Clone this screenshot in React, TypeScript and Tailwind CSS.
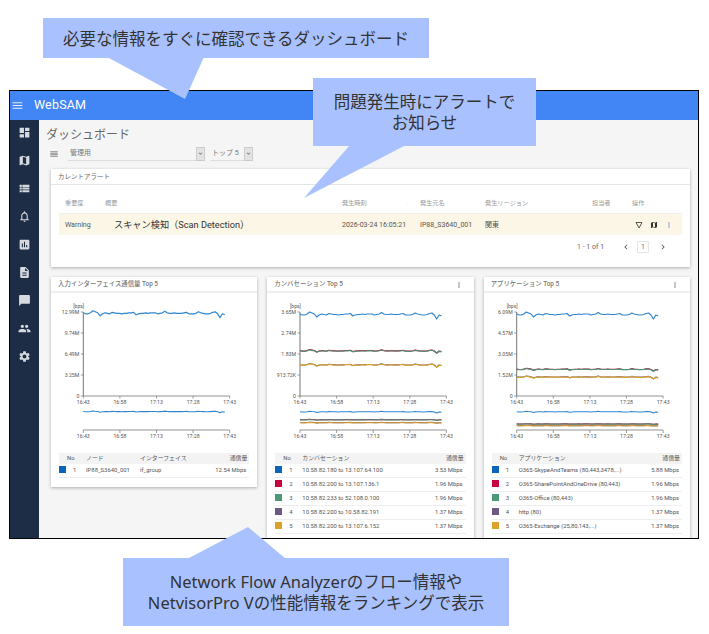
import {
  MdAssessment,
  MdChatBubble,
  MdChevronLeft,
  MdChevronRight,
  MdDashboard,
  MdDescription,
  MdExpandMore,
  MdMap,
  MdMenu,
  MdMoreVert,
  MdNotificationsNone,
  MdPeople,
  MdSettings,
  MdViewList,
} from 'react-icons/md';

const BLUE = '#2f86cf';
const RED = '#c7043f';
const GREEN = '#4f8f74';
const PURPLE = '#6c5a85';
const YELLOW = '#dba32a';
const swatches = ['bg-[#0b66bb]', 'bg-[#c7043f]', 'bg-[#4b9976]', 'bg-[#6c5a85]', 'bg-[#dba32a]'];

// pixel offsets of the traffic line, positive is down
const wave = [
  0, 1, 1, 0, -2, -1, 0, 3, 1, 0, 0.5, 1, -0.5, 0, 0.5, 0.5, 1, 0.5, 0.5, 0, 0, -0.5, 2, 1, 0.5, 0.5, 0, 0.5, 0, 0,
  0, 1, 0.5, 0, -1.5, 0, 0.5, 0.5, 0, 0.5, 0.5, 0.5, 0, -0.5, 1, 1, 1, 0.5, -1, 0, 0.5, 1, 1, 0.5, -0.5, -1, 1, 5, 1, 2,
];

type Series = { color: string; y: number; brushY: number; amp: number };

type ChartProps = {
  left: number;
  yTicks: string[];
  series: Series[];
};

function points(left: number, base: number, amp: number) {
  return wave
    .map((d, i) => `${(left + (i * 141.5) / (wave.length - 1)).toFixed(1)},${(base + d * amp).toFixed(1)}`)
    .join(' ');
}

function Chart({ left, yTicks, series }: ChartProps) {
  const xLabels = ['16:43', '16:58', '17:13', '17:28', '17:43'];
  const xs = xLabels.map((_, i) => left + i * 36.6);
  return (
    <svg width="207" height="160" className="block" fontSize="5.2" fill="#555">
      <text x={left - 10} y="14.5" fontSize="5">[bps]</text>
      {yTicks.map((t, i) => {
        const y = 19 + i * 21;
        return (
          <g key={t}>
            <text x={left - 4} y={y + 2} textAnchor="end">{t}</text>
            <line x1={left - 2.5} x2={left} y1={y} y2={y} stroke="#777" strokeWidth="0.7" />
          </g>
        );
      })}
      <line x1={left} x2={left} y1="19" y2="103" stroke="#666" strokeWidth="0.9" />
      <line x1={left} x2={xs[4]} y1="103" y2="103" stroke="#777" strokeWidth="0.8" />
      {xLabels.map((t, i) => (
        <g key={t}>
          <line x1={xs[i]} x2={xs[i]} y1="103" y2="105.5" stroke="#777" strokeWidth="0.7" />
          <text x={xs[i]} y="111" textAnchor="middle">{t}</text>
          <line x1={xs[i]} x2={xs[i]} y1="137" y2="140" stroke="#777" strokeWidth="0.7" />
          <text x={xs[i]} y="145" textAnchor="middle">{t}</text>
        </g>
      ))}
      <line x1={left} x2={xs[4]} y1="137" y2="137" stroke="#777" strokeWidth="0.8" />
      {series.map((s, i) => (
        <g key={i} fill="none" stroke={s.color} strokeLinejoin="round">
          <polyline points={points(left, s.y, s.amp)} strokeWidth="1.2" />
          <polyline points={points(left, s.brushY, s.amp * 0.25)} strokeWidth="1.1" />
        </g>
      ))}
    </svg>
  );
}

type Row = { name: string; sub?: string; value: string };

type ChartCardProps = ChartProps & {
  title: string;
  menu?: boolean;
  nameHead: string;
  subHead?: string;
  rows: Row[];
};

function ChartCard({ title, menu, nameHead, subHead, rows, ...chart }: ChartCardProps) {
  return (
    <div className="bg-white shadow-[0_1px_3px_rgba(0,0,0,0.3)]">
      <div className="h-4 flex items-center justify-between pt-[2px] pl-[7px] pr-[11px] border-b-2 border-[#eeeeee]">
        <span className="text-[6.4px] font-medium text-[#777777]">{title}</span>
        {menu && <MdMoreVert className="w-2 h-2 text-[#555555]" />}
      </div>
      <Chart {...chart} />
      <div className="mx-2 pb-[9px] text-[5.9px] text-[#555555]">
        <div className="h-[10.5px] bg-[#f3f3f3] flex items-center pr-[2px]">
          <span className="w-[27px] pl-2">No</span>
          <span className={subHead ? 'w-[54px]' : 'flex-1'}>{nameHead}</span>
          {subHead && <span className="flex-1">{subHead}</span>}
          <span>通信量</span>
        </div>
        {rows.map((r, i) => (
          <div key={i} className="h-[14px] flex items-center pr-[3px] border-b border-[#eeeeee]">
            <span className="w-[27px] flex items-center">
              <span className={`w-[7px] h-[7px] ${swatches[i]}`} />
              <span className="ml-[7px]">{i + 1}</span>
            </span>
            <span className={r.sub ? 'w-[54px]' : 'flex-1'}>{r.name}</span>
            {r.sub && <span className="flex-1">{r.sub}</span>}
            <span>{r.value}</span>
          </div>
        ))}
      </div>
    </div>
  );
}

function Select({ label, className }: { label: string; className: string }) {
  return (
    <div className={`flex items-center h-[15px] ${className}`}>
      <div className="flex-1 h-[14px] flex items-center pl-[2px] text-[7px] text-[#777777] border-b border-[#dddddd]">
        {label}
      </div>
      <div className="w-[9px] h-[14px] flex items-center justify-center bg-[#e3e3e3] border border-[#cccccc]">
        <MdExpandMore className="w-[7px] h-[7px] text-[#666666]" />
      </div>
    </div>
  );
}

function Sidebar() {
  const icons = [MdDashboard, MdMap, MdViewList, MdNotificationsNone, MdAssessment, MdDescription, MdChatBubble, MdPeople, MdSettings];
  return (
    <div className="w-[29px] shrink-0 bg-[#1c2d45] flex flex-col items-center pt-[6px] gap-[15px]">
      {icons.map((Icon, i) => (
        <Icon key={i} className="w-[13px] h-[13px] text-[#d6dae0]" />
      ))}
    </div>
  );
}

function AlertCard() {
  const cols = 'grid grid-cols-[46px_237px_78px_65px_107px_40px_1fr] items-center';
  return (
    <div className="bg-white shadow-[0_1px_3px_rgba(0,0,0,0.3)]">
      <div className="h-4 flex items-center pt-[2px] pl-[7px] border-b border-[#e5e5e5] text-[6.5px] text-[#666666]">
        カレントアラート
      </div>
      <div className="px-2 pb-2">
        <div className={`${cols} mt-3 h-[17px] pb-[2px] text-[6.2px] text-[#999999] border-b border-[#f0f0f0]`}>
          <span className="pl-[6px]">重要度</span>
          <span>概要</span>
          <span className="flex justify-between pr-[12px]">
            発生時刻<span className="text-[#dddddd]">-</span>
          </span>
          <span>発生元名</span>
          <span>発生リージョン</span>
          <span>担当者</span>
          <span>操作</span>
        </div>
        <div className={`${cols} h-[21px] pt-[1px] bg-[#fbf6e5] text-[7px] text-[#555555]`}>
          <span className="pl-[6px]">Warning</span>
          <span className="pl-[9px] text-[9.2px] text-[#333333]">スキャン検知（Scan Detection）</span>
          <span>2026-03-24 16:05:21</span>
          <span>IP88_S3640_001</span>
          <span>関東</span>
          <span />
          <span className="flex items-center gap-[7px] pl-[3px]">
            <svg width="8" height="8" viewBox="0 0 8 8" fill="none" stroke="#444444" strokeWidth="0.9">
              <path d="M1 1.5h6L4 7z" />
            </svg>
            <MdMap className="w-2 h-2 text-[#333333]" />
            <MdMoreVert className="w-2 h-2 text-[#5c7fd0]" />
          </span>
        </div>
        <div className="h-6 flex items-center text-[7px] text-[#666666] pl-[518px]">
          <span className="w-[44px]">1 - 1 of 1</span>
          <MdChevronLeft className="w-[10px] h-[10px] text-[#555555]" />
          <span className="ml-[6px] w-3 h-3 flex items-center justify-center border border-[#e5e5e5] rounded-[1px]">1</span>
          <MdChevronRight className="ml-[9px] w-[10px] h-[10px] text-[#555555]" />
        </div>
      </div>
    </div>
  );
}

function Callouts() {
  const box =
    "absolute flex items-center justify-center text-center bg-[#a9c2ff] font-['Noto_Sans','Noto_Sans_CJK_JP',sans-serif] text-[16.5px] leading-[21px] text-[#333333]";
  return (
    <>
      <svg className="absolute left-0 top-0" width="709" height="634" fill="#a9c2ff">
        <polygon points="107,57 204,57 185,99" />
        <polygon points="350,145 406,145 304,198" />
        <polygon points="187,559 248,527 286,559" />
      </svg>
      <div className={`${box} left-[43px] top-[18px] w-[386px] h-10`}>必要な情報をすぐに確認できるダッシュボード</div>
      <div className={`${box} left-[313px] top-[78px] w-[223px] h-[68px]`}>
        問題発生時にアラートで
        <br />
        お知らせ
      </div>
      <div className={`${box} left-[123px] top-[558px] w-[386px] h-[68px]`}>
        Network Flow Analyzerのフロー情報や
        <br />
        NetvisorPro Vの性能情報をランキングで表示
      </div>
    </>
  );
}

export default function App() {
  return (
    <div className="relative w-[709px] h-[634px] bg-white overflow-hidden font-[Roboto,'Noto_Sans_CJK_JP',sans-serif]">
      <div className="pt-[90px] pl-[9px]">
        <div className="w-[690px] h-[449px] border border-black flex flex-col overflow-hidden">
          <header className="h-[29px] shrink-0 bg-[#4285f4] flex items-center text-white">
            <MdMenu className="ml-[1px] w-[13px] h-[13px] text-[#e8efff]" />
            <span className="ml-[10px] text-[12.5px] tracking-[0.2px]">WebSAM</span>
          </header>
          <div className="flex flex-1 min-h-0">
            <Sidebar />
            <main className="flex-1 bg-[#f5f5f5] pl-3 pr-2 overflow-hidden">
              <div className="-ml-[5px] mt-[7px] h-4 flex items-center text-[12px] text-[#666666]">ダッシュボード</div>
              <div className="flex items-center h-[15px] mt-[3px]">
                <MdMenu className="-ml-[2px] w-[10px] h-[10px] text-[#555555]" />
                <Select label="管理用" className="ml-[9px] w-[137px]" />
                <Select label="トップ 5" className="ml-[5px] w-[43px]" />
              </div>
              <div className="mt-2">
                <AlertCard />
              </div>
              <div className="mt-[10px] grid grid-cols-3 gap-[10px] items-start">
                <ChartCard
                  title="入力インターフェイス通信量 Top 5"
                  left={32.3}
                  yTicks={['12.99M', '9.74M', '6.49M', '3.25M', '0']}
                  series={[{ color: BLUE, y: 19.8, brushY: 118.5, amp: 1 }]}
                  nameHead="ノード"
                  subHead="インターフェイス"
                  rows={[{ name: 'IP88_S3640_001', sub: 'if_group', value: '12.54 Mbps' }]}
                />
                <ChartCard
                  title="カンバセーション Top 5"
                  menu
                  left={33}
                  yTicks={['3.65M', '2.74M', '1.83M', '913.72K', '0']}
                  series={[
                    { color: PURPLE, y: 71.5, brushY: 129.5, amp: 0.5 },
                    { color: YELLOW, y: 71.7, brushY: 129.7, amp: 0.5 },
                    { color: RED, y: 57.5, brushY: 126.6, amp: 0.5 },
                    { color: GREEN, y: 57.8, brushY: 126.8, amp: 0.5 },
                    { color: BLUE, y: 21, brushY: 118.7, amp: 1 },
                  ]}
                  nameHead="カンバセーション"
                  rows={[
                    { name: '10.58.82.180 to 13.107.64.100', value: '3.53 Mbps' },
                    { name: '10.58.82.200 to 13.107.136.1', value: '1.96 Mbps' },
                    { name: '10.58.82.233 to 52.108.0.100', value: '1.96 Mbps' },
                    { name: '10.58.82.200 to 10.58.82.191', value: '1.37 Mbps' },
                    { name: '10.58.82.200 to 13.107.6.152', value: '1.37 Mbps' },
                  ]}
                />
                <ChartCard
                  title="アプリケーション Top 5"
                  menu
                  left={32.7}
                  yTicks={['6.09M', '4.57M', '3.05M', '1.52M', '0']}
                  series={[
                    { color: PURPLE, y: 83.8, brushY: 132.5, amp: 0.4 },
                    { color: YELLOW, y: 84, brushY: 132.7, amp: 0.4 },
                    { color: RED, y: 76.1, brushY: 130.9, amp: 0.4 },
                    { color: GREEN, y: 76.3, brushY: 131, amp: 0.4 },
                    { color: BLUE, y: 21, brushY: 118.7, amp: 1 },
                  ]}
                  nameHead="アプリケーション"
                  rows={[
                    { name: 'O365-SkypeAndTeams (80,443,3478,...)', value: '5.88 Mbps' },
                    { name: 'O365-SharePointAndOneDrive (80,443)', value: '1.96 Mbps' },
                    { name: 'O365-Office (80,443)', value: '1.96 Mbps' },
                    { name: 'http (80)', value: '1.37 Mbps' },
                    { name: 'O365-Exchange (25,80,143,...)', value: '1.37 Mbps' },
                  ]}
                />
              </div>
            </main>
          </div>
        </div>
      </div>
      <Callouts />
    </div>
  );
}
